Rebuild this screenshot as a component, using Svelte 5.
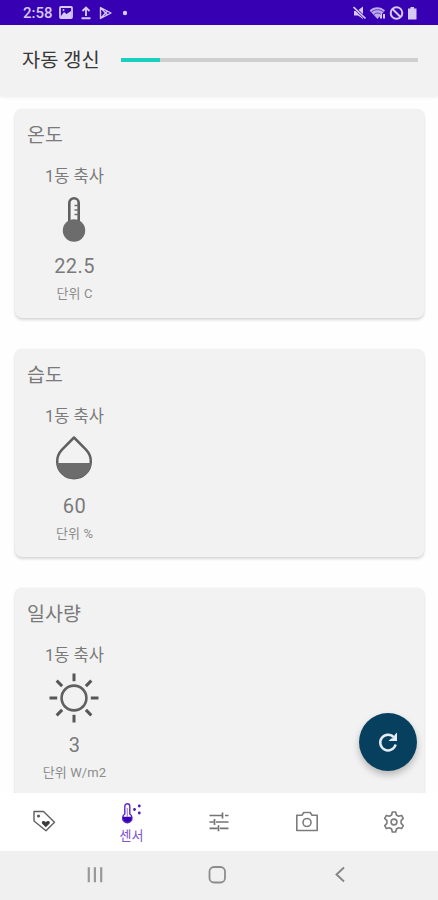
<script>
  const cards = [
    { title: '온도', icon: 'temp', value: '22.5', unit: '단위 C' },
    { title: '습도', icon: 'drop', value: '60', unit: '단위 %' },
    { title: '일사량', icon: 'sun', value: '3', unit: '단위 W/m2' }
  ];
  const rays = [0, 45, 90, 135, 180, 225, 270, 315];
</script>

<div class="screen">
  <div class="status">
    <span class="time">2:58</span>
    <svg class="left" width="72" height="16" viewBox="0 0 72 16">
      <rect x="1" y="2" width="12" height="11" rx="1" fill="none" stroke="#d6c9f5" stroke-width="1.8" />
      <path d="M2 11l3-4 2.5 2L12 6v6H2z" fill="#d6c9f5" /><circle cx="4.5" cy="5" r="1" fill="#d6c9f5" />
      <path d="M27 11V3M23.5 6L27 2.5 30.500 6M22.500 13.200h9" fill="none" stroke="#d6c9f5" stroke-width="1.9" />
      <path d="M41.500 2.500v11l10.500-5.500zM41.500 2.500l7 7.500M41.500 13.500l7-7.500" fill="none" stroke="#d6c9f5" stroke-width="1.4" stroke-linejoin="round" />
      <circle cx="66" cy="8" r="2.200" fill="#d6c9f5" />
    </svg>
    <svg class="right" width="66" height="16" viewBox="0 0 66 16">
      <g fill="#d6c9f5">
        <path d="M1 6h3l6-4.500v12.500L5 10.500H1z" />
        <path d="M16.500 5.500C20.500 1 28 1 32 5.500L24.500 14z" opacity=".85" />
        <path d="M27 9h2v4.500h-2zM30 9h2v4.500h-2z" />
        <path d="M55 3.500h2.500V2h3.500v1.500h2.500V14.500H55z" />
      </g>
      <path d="M0.500 2l12 11.500" stroke="#3700b3" stroke-width="3" /><path d="M0.500 2l12 11.500" stroke="#d6c9f5" stroke-width="1.700" />
      <path d="M18.500 7C22 4 27 4 30.500 7M21 9.500c2-2 5-2 7 0" fill="none" stroke="#3700b3" stroke-width=".7" />
      <circle cx="43.500" cy="8" r="5.800" fill="none" stroke="#d6c9f5" stroke-width="2" /><path d="M39.500 4l8 8" stroke="#d6c9f5" stroke-width="2" />
    </svg>
  </div>

  <header>
    <span>자동 갱신</span>
    <div class="track"><div class="fill"></div></div>
  </header>

  <main>
    {#each cards as c}
      <section class="card">
        <h2>{c.title}</h2>
        <div class="sensor">
          <div class="name">1동 축사</div>
          <svg class="icon" width="52" height="52" viewBox="0 0 52 52">
            {#if c.icon === 'temp'}
              <path d="M21.300 28V9a4.700 4.700 0 0 1 9.400 0V28" fill="none" stroke="#606060" stroke-width="2.600" />
              <circle cx="26" cy="36.500" r="11.200" fill="#6c6c6c" />
              <path d="M26.500 11.500h4M26.500 16h4M26.500 20.500h4" stroke="#707070" stroke-width="1.600" />
            {:else if c.icon === 'drop'}
              <path d="M26 3.500L13.800 15.800a16.800 16.800 0 1 0 24.400 0z" fill="none" stroke="#606060" stroke-width="2.500" stroke-linejoin="round" />
              <path d="M9 29h34a17 15.500 0 0 1-34 0z" fill="#6c6c6c" />
            {:else}
              <circle cx="26" cy="25" r="12.400" fill="none" stroke="#606060" stroke-width="2.600" />
              {#each rays as r}
                <path d="M26 .5v7.700" stroke="#565656" stroke-width="3" transform="rotate({r} 26 25)" />
              {/each}
            {/if}
          </svg>
          <div class="value">{c.value}</div>
          <div class="unit">{c.unit}</div>
        </div>
      </section>
    {/each}
  </main>

  <button class="fab" aria-label="새로 고침">
    <svg width="24" height="24" viewBox="0 0 24 24">
      <path d="M18 7.500A7.800 7.800 0 1 0 19.600 14.500" fill="none" stroke="#e4edf5" stroke-width="2.500" />
      <path d="M21 2.500v8.500h-8.500l2.800-2.500 2.500-.5.700-3z" fill="#e4edf5" />
    </svg>
  </button>

  <nav>
    <div class="tab">
      <svg width="24" height="24" viewBox="0 0 24 24" fill="none" stroke="#606060" stroke-width="1.400" stroke-linejoin="round">
        <path d="M2 1.500h9.500L22.500 12.200l-8.500 8.600L2 11z" /><circle cx="6.500" cy="6" r=".9" fill="#444" />
        <path d="M13.800 17.200l-3.600-3.500c-1.100-1.500.2-2.900 1.600-2.600 1 .1 1.600.6 2 1.300.4-.7 1-1.200 2-1.300 1.400-.3 2.700 1.100 1.600 2.600z" fill="#3c3c3c" stroke="none" />
      </svg>
    </div>
    <div class="tab active">
      <svg width="24" height="22" viewBox="0 0 24 22">
        <path d="M5.800 12V4.200a2.500 2.500 0 0 1 5 0V12a4.700 4.700 0 1 1-5 0z" fill="none" stroke="#5b2bc4" stroke-width="1.400" />
        <path d="M4 14.800h8.600a4.400 4.400 0 0 1-8.600 2z" fill="#3700b3" /><path d="M8.300 6v9" stroke="#a48be0" stroke-width="1.200" />
        <circle cx="15.500" cy="7.500" r="1.400" fill="#4a18bd" /><circle cx="20.300" cy="4" r="1.400" fill="#4a18bd" /><circle cx="20.300" cy="11" r="1.400" fill="#4a18bd" />
      </svg>
      <span>센서</span>
    </div>
    <div class="tab">
      <svg width="24" height="24" viewBox="0 0 24 24" stroke="#747474" stroke-width="1.700" fill="none">
        <path d="M2.500 5.500h13M18 5.500h3.500M15.500 2.500v6M2.500 12h4M9 12h12.500M7.500 9v6M2.500 18.300h8M13 18.300h8.500M11.500 15.300v6" />
      </svg>
    </div>
    <div class="tab">
      <svg width="24" height="24" viewBox="0 0 24 24" stroke="#7c7c7c" stroke-width="1.600" fill="none" stroke-linejoin="round">
        <path d="M1.800 5.200H7L8.800 2.500h6.400L17 5.200h5.200v15.300H1.800z" /><circle cx="12" cy="12.500" r="4" />
      </svg>
    </div>
    <div class="tab">
      <svg width="24" height="24" viewBox="0 0 24 24" stroke="#7c7c7c" stroke-width="1.600" fill="none" stroke-linejoin="round">
        <path d="M10.300 2h3.400l.7 3 2.200 1.300 3-.9 1.700 3-2.200 2.200v2.800l2.200 2.200-1.700 3-3-.9-2.200 1.300-.7 3h-3.400l-.7-3-2.200-1.300-3 .9-1.700-3 2.200-2.200v-2.800L2.700 8.400l1.700-3 3 .9L9.600 5z" /><circle cx="12" cy="12" r="2.900" />
      </svg>
    </div>
  </nav>

  <div class="system">
    <svg width="20" height="20" viewBox="0 0 20 20"><path d="M3.800 2.300v15M9.900 2.300v15M16.200 2.300v15" stroke="#999" stroke-width="2.200" /></svg>
    <svg width="20" height="20" viewBox="0 0 20 20"><rect x="1.500" y="2" width="15.500" height="15.500" rx="4.500" fill="none" stroke="#8c8c8c" stroke-width="1.800" /></svg>
    <svg width="20" height="20" viewBox="0 0 20 20"><path d="M14 2.500L6.500 9.500l7.500 7" fill="none" stroke="#858585" stroke-width="1.900" /></svg>
  </div>
</div>

<style>
  .screen {
    position: relative;
    display: flex;
    flex-direction: column;
    width: 438px;
    height: 900px;
    overflow: hidden;
    background: #fefefe;
    font-family: Roboto, 'Noto Sans CJK KR', sans-serif;
    color: #7a7a7a;
  }
  svg { display: block; flex: none; }
  .status {
    display: flex;
    align-items: center;
    height: 25px;
    flex: none;
    box-sizing: border-box;
    padding: 0 19px 0 23px;
    background: #3700b3;
  }
  .time { width: 36px; font-size: 15px; line-height: 25px; color: #d6c9f5; font-weight: 500; padding-top: 2px; box-sizing: border-box; }
  .status .right { margin-left: auto; }
  header {
    display: flex;
    align-items: center;
    gap: 21px;
    height: 71px;
    flex: none;
    box-sizing: border-box;
    padding: 0 20px 1px 22px;
    background: #f2f2f2;
    box-shadow: 0 1px 3px rgba(0, 0, 0, .08);
  }
  header span { width: 78px; white-space: nowrap; font-size: 19.800px; line-height: 28px; padding-top: 2px; color: #383838; }
  .track { flex: 1; height: 4px; background: #cfcfcf; }
  .fill { width: 39px; height: 4px; background: #18cfc0; }
  main {
    display: flex;
    flex-direction: column;
    gap: 31px;
    flex: 1;
    min-height: 0;
    overflow: hidden;
    padding: 13px 14px 0 15px;
  }
  .card {
    flex: none;
    height: 208.500px;
    box-sizing: border-box;
    padding: 13px 12px 0;
    border-radius: 7px;
    background: #f2f2f2;
    box-shadow: 0 2px 3px rgba(0, 0, 0, .15), 0 0 2px rgba(0, 0, 0, .07);
  }
  h2 { margin: 0; height: 28px; font-size: 19.500px; line-height: 28px; font-weight: 400; }
  .sensor { display: flex; flex-direction: column; align-items: center; width: 95px; padding-top: 15px; }
  .name { height: 24px; font-size: 16.500px; line-height: 24px; white-space: nowrap; }
  .icon { margin: 5px 1px 0 0; }
  .value { height: 26px; margin-top: 7px; font-size: 20px; line-height: 26px; letter-spacing: .4px; }
  .unit { height: 20px; margin-top: 5px; font-size: 13px; line-height: 20px; white-space: nowrap; letter-spacing: .1px; color: #8c8c8c; }
  .fab {
    position: absolute;
    left: 359px;
    top: 713px;
    display: flex;
    align-items: center;
    justify-content: center;
    width: 58px;
    height: 58px;
    padding: 0;
    border: 0;
    border-radius: 50%;
    background: #07405f;
    box-shadow: 0 4px 7px rgba(0, 0, 0, .24);
  }
  nav { display: flex; height: 58px; flex: none; background: #fff; }
  .tab { flex: 1; display: flex; flex-direction: column; align-items: center; justify-content: center; }
  .active { justify-content: flex-start; padding-top: 9px; color: #7c52d8; }
  .active span { font-size: 13px; line-height: 23px; }
  .system { display: flex; justify-content: space-between; align-items: center; height: 49px; flex: none; box-sizing: border-box; padding: 0 88px 2px 85px; background: #f0f0f0; }
</style>
